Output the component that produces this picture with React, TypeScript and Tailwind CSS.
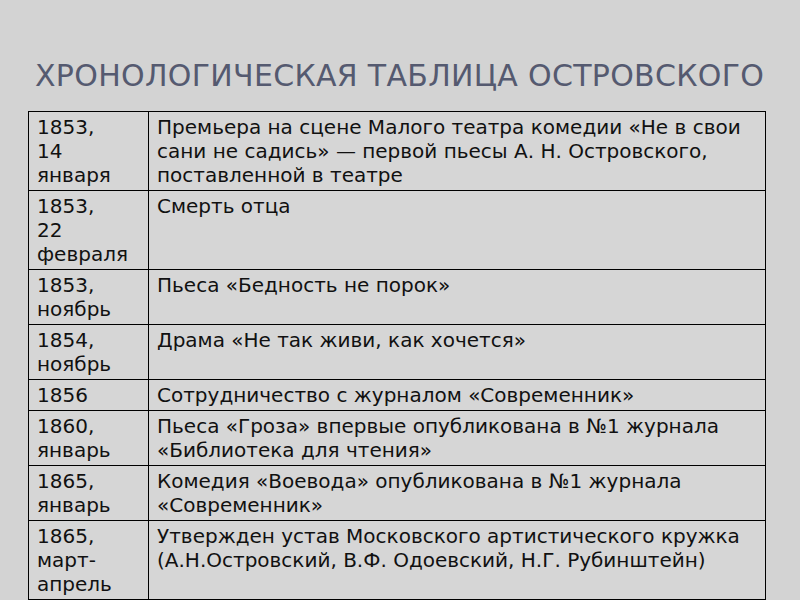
const rows: [string[], string][] = [
  [['1853,', '14', 'января'], 'Премьера на сцене Малого театра комедии «Не в свои сани не садись» — первой пьесы А. Н. Островского, поставленной в театре'],
  [['1853,', '22', 'февраля'], 'Смерть отца'],
  [['1853,', 'ноябрь'], 'Пьеса «Бедность не порок»'],
  [['1854,', 'ноябрь'], 'Драма «Не так живи, как хочется»'],
  [['1856'], 'Сотрудничество с журналом «Современник»'],
  [['1860,', 'январь'], 'Пьеса «Гроза» впервые опубликована в №1 журнала «Библиотека для чтения»'],
  [['1865,', 'январь'], 'Комедия «Воевода» опубликована в №1 журнала «Современник»'],
  [['1865,', 'март-', 'апрель'], 'Утвержден устав Московского артистического кружка (А.Н.Островский, В.Ф. Одоевский, Н.Г. Рубинштейн)'],
]

export default function App() {
  return (
    <div
      className="w-[800px] h-[600px] overflow-hidden bg-[#d3d3d3] text-black"
      style={{ fontFamily: '"DejaVu Sans", sans-serif' }}
    >
      <h1 className="pt-[58px] pl-[35px] text-[30px] leading-[36px] tracking-[0.3px] text-[#555a70] whitespace-nowrap">
        ХРОНОЛОГИЧЕСКАЯ ТАБЛИЦА ОСТРОВСКОГО
      </h1>
      <table className="ml-[28px] mt-[17px] w-[738px] border-collapse bg-[#d6d6d6] text-[20px] leading-[24px] text-[#111]">
        <tbody>
          {rows.map(([date, text], i) => (
            <tr key={i}>
              <td className="w-[120px] border border-black px-2 pt-[3px] pb-[3px] align-top">
                {date.map((d, j) => (
                  <div key={j}>{d}</div>
                ))}
              </td>
              <td className="border border-black px-2 pt-[3px] pb-[3px] align-top">{text}</td>
            </tr>
          ))}
        </tbody>
      </table>
    </div>
  )
}
